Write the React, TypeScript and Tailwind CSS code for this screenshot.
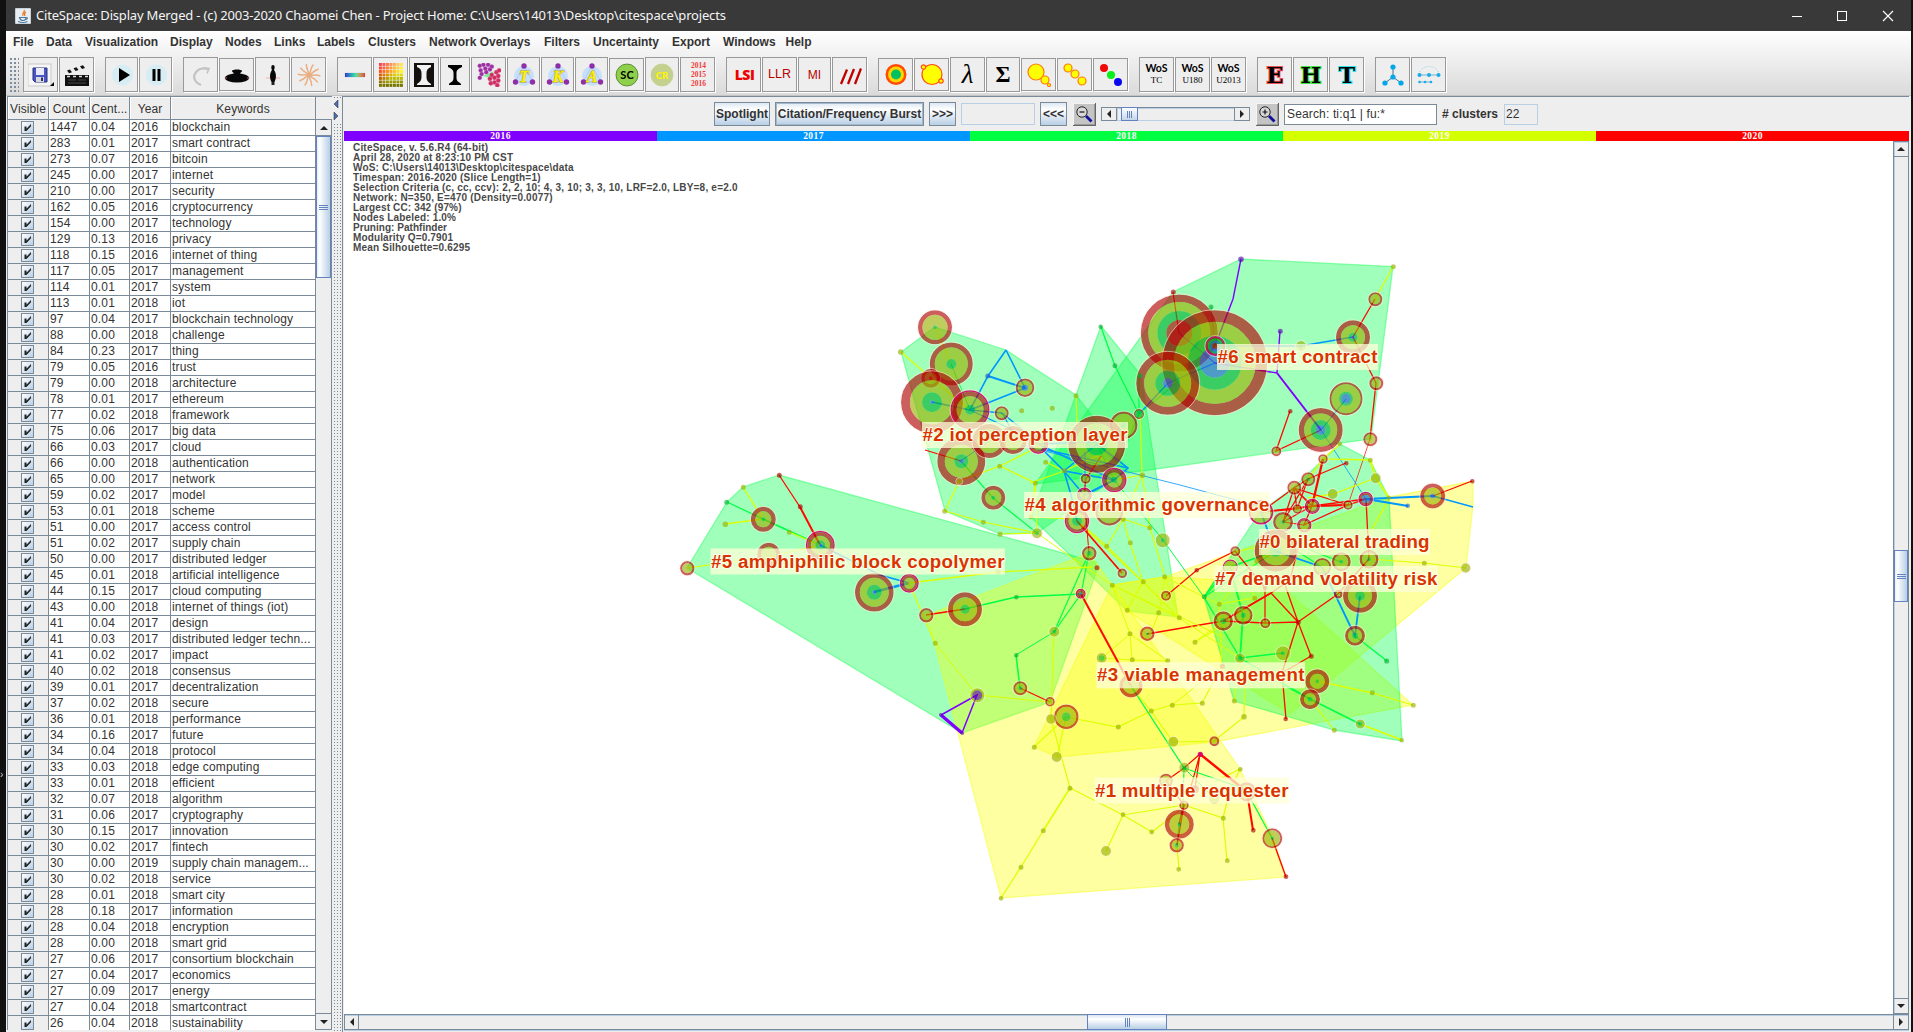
import React from "react";

const MENUS: [string, number][] = [
  ["File", 33], ["Data", 39], ["Visualization", 85], ["Display", 55], ["Nodes", 49], ["Links", 43], ["Labels", 51],
  ["Clusters", 61], ["Network Overlays", 115], ["Filters", 49], ["Uncertainty", 79], ["Export", 51], ["Windows", 62.5], ["Help", 40],
];

const ROWS = `1447|0.04|2016|blockchain
283|0.01|2017|smart contract
273|0.07|2016|bitcoin
245|0.00|2017|internet
210|0.00|2017|security
162|0.05|2016|cryptocurrency
154|0.00|2017|technology
129|0.13|2016|privacy
118|0.15|2016|internet of thing
117|0.05|2017|management
114|0.01|2017|system
113|0.01|2018|iot
97|0.04|2017|blockchain technology
88|0.00|2018|challenge
84|0.23|2017|thing
79|0.05|2016|trust
79|0.00|2018|architecture
78|0.01|2017|ethereum
77|0.02|2018|framework
75|0.06|2017|big data
66|0.03|2017|cloud
66|0.00|2018|authentication
65|0.00|2017|network
59|0.02|2017|model
53|0.01|2018|scheme
51|0.00|2017|access control
51|0.02|2017|supply chain
50|0.00|2017|distributed ledger
45|0.01|2018|artificial intelligence
44|0.15|2017|cloud computing
43|0.00|2018|internet of things (iot)
41|0.04|2017|design
41|0.03|2017|distributed ledger techn...
41|0.02|2017|impact
40|0.02|2018|consensus
39|0.01|2017|decentralization
37|0.02|2018|secure
36|0.01|2018|performance
34|0.16|2017|future
34|0.04|2018|protocol
33|0.03|2018|edge computing
33|0.01|2018|efficient
32|0.07|2018|algorithm
31|0.06|2017|cryptography
30|0.15|2017|innovation
30|0.02|2017|fintech
30|0.00|2019|supply chain managem...
30|0.02|2018|service
28|0.01|2018|smart city
28|0.18|2017|information
28|0.04|2018|encryption
28|0.00|2018|smart grid
27|0.06|2017|consortium blockchain
27|0.04|2017|economics
27|0.09|2017|energy
27|0.04|2018|smartcontract
26|0.04|2018|sustainability`.split("\n").map((l) => l.split("|"));

const INFO: [string, number][] = [
  ["CiteSpace, v. 5.6.R4 (64-bit)", 135],
  ["April 28, 2020 at 8:23:10 PM CST", 160],
  ["WoS: C:\\Users\\14013\\Desktop\\citespace\\data", 220.5],
  ["Timespan: 2016-2020 (Slice Length=1)", 187.5],
  ["Selection Criteria (c, cc, ccv): 2, 2, 10; 4, 3, 10; 3, 3, 10, LRF=2.0, LBY=8, e=2.0", 384.5],
  ["Network: N=350, E=470 (Density=0.0077)", 199.5],
  ["Largest CC: 342 (97%)", 108.5],
  ["Nodes Labeled: 1.0%", 103],
  ["Pruning: Pathfinder", 94],
  ["Modularity Q=0.7901", 100],
  ["Mean Silhouette=0.6295", 117],
];

/* ---------- network data, in window coordinates ---------- */

const HULLS: [string, string][] = [
  ["g", "779,475 743,487 727,502 687,568 962,733 1050,702 1096,573 1096,562"],
  ["g", "935,327 1006,350 1076,395 1097,422 1127,470 1037,533 1000,534 945,511 901,352"],
  ["g", "1101,326 1141,375 1178,617 1127,611 1031,517 1076,395"],
  ["g", "1173,292 1241,259 1393,266.5 1371,439 1142,471 1035,484"],
  ["y", "927,615 1089,553 1112,585 1240,769 1273,838 1286,877 1001,898"],
  ["y", "1112,585 1164,577 1278,583 1413,705 1214,742 1057,757 1034,747"],
  ["y", "1112,585 1164,577 1204,563 1389,497 1473,481 1473,506 1466,568 1290,714 1127,611"],
  ["g", "1340,444 1370,460 1389,498 1402,741 1334,730 1234,701 1204,597 1235,550 1260,512 1294,487"],
];

const EDGES = `y1 935,327 951,364
y1.3 901,352 931,378 970,410
g1 951,364 970,410
b1.3 932,402 970,410 1002,413
b1.6 1006,350 988,376 970,410 1025,388 1006,350
b2 988,376 1025,388
b1.3 970,410 1013,430 1038,444 1097,442
b1.3 1002,413 1013,432 1002,413 1038,442
r1.2 925,450 961,461
b1 961,461 989,441
g1.2 961,461 993,498 1037,533
y1.2 945,511 959,481 1000,466 1035,483 1037,533 983,522 945,511
y1.2 1000,534 1037,533
y1.2 1000,466 1038,447
y1.2 1035,483 1031,517
y1.2 1076,396 1077,425
y1.2 1046,462 1064,471 1097,456 1108,462
y1.2 1064,471 1030,483
y1.2 1114,480 1142,475 1140,414
y1.2 1142,475 1123,519 1107,546
y1.2 1142,475 1150,528 1165,577
y1 1037,533 1075,560 1112,585
y1.2 1077,521 1107,546 1143,582 1130,543 1123,519 1150,528
y1.2 1077,521 1143,582 1127,610
y1.2 1031,517 1070,519
y1.2 1143,582 1179,618
g1.3 1101,327 1115,366 1139,414
g1.2 1139,376 1139,414 1118,464 1097,444
g1.3 1124,425 1097,444 1114,480
g1 1114,480 1163,540 1204,597
b1.3 1139,414 1168,383 1215,363
g1 1139,414 1179,381
b1.6 1038,444 1114,480 1064,471 1084,495 1114,480
b1.6 1042,449 1064,471 1071,495 1077,521
b1.6 1064,471 1097,444 1128,468 1114,480 1080,498
b1.3 1085,452 1085,495
b0.8 1021,445 1140,475 1180,485 1258,506
r1.3 1086,479 1101,456
r1.2 1086,479 1084,495
b1.6 1042,449 1128,468
r1.8 1077,521 1122,573
r1 1084,495 1089,553
r1.2 1173,292 1179,333
p1 1179,333 1215,363
g1 1211,307 1215,346
p1.4 1241,259 1233,299 1215,346
b1.4 1215,346 1301,346 1353,337
y1.3 1393,267 1375,299
r1.3 1375,299 1353,337 1376,383 1370,439
r0.7 1370,439 1348,505
p1.4 1215,363 1277,373 1280,331
p2 1277,373 1321,430
b1 1321,430 1346,399
b0.8 1321,430 1366,499
r1.3 1290,411 1276,451 1321,430
y1.3 1370,460 1323,459 1340,444
y2 1370,460 1376,478 1389,498
y1.3 1308,479 1323,459
y1.3 1308,498 1333,494 1376,478
y1.3 1389,498 1369,535
r2.2 1323,459 1312,506
r1.3 1346,463 1308,479 1294,488 1348,505 1304,525 1312,506 1294,488 1261,512 1312,506 1366,499
r1.3 1308,479 1283,522 1294,488 1297,509 1261,512
r1.3 1312,506 1348,505 1366,499 1369,559
r1.8 1312,506 1348,505
r1.2 1308,479 1297,509 1312,506 1294,488
r1 1283,522 1304,525
r1.2 1283,522 1312,506
b2 1366,499 1433,496
b2 1366,499 1408,506
b1.3 1433,496 1473,507
r1.3 1433,496 1472,481
b1.8 1261,512 1275,551 1322,567 1355,636 1360,596
g1.8 1276,551 1230,567
g1.2 1276,551 1204,597
g1.2 1295,550 1322,567
g1.3 1310,550 1341,562
y1.2 1369,559 1424,563 1466,568
y1.2 1230,553 1257,547
y1 1257,561 1276,551
y1 1219,604 1257,561
r1.2 1166,596 1197,570 1235,551 1265,588 1265,623
r1.3 1223,621 1271,593 1290,580 1298,548
r1.3 1271,593 1298,622 1285,585
r1.3 1298,622 1338,594 1369,559
r1.3 1147,634 1223,621 1265,623 1298,622 1311,656 1282,673 1286,719
r1.3 1298,622 1282,673
r1.8 1223,621 1271,593
g1.8 1230,567 1243,615 1240,658
g1.4 1230,567 1204,597 1240,658 1283,653
g1.3 1204,597 1222,570
g1.3 1240,658 1310,699
g1.6 1282,684 1310,699 1360,724
y1.8 1360,724 1402,740
g1.5 1355,636 1387,661
y1.3 1317,681 1372,693 1413,705
y1.2 1310,699 1334,730
y1 1165,577 1204,597 1219,604 1255,598 1252,590
y1 1165,577 1159,613 1150,634
y1 1223,621 1195,642
y1 1219,604 1222,666
y1 1112,585 1223,637
y1 1179,618 1240,658
y1 1165,577 1179,618 1112,585 1130,634 1132,660
y1 1130,634 1102,658 1132,660 1168,661 1130,634
y1.2 1195,642 1223,625
y1.2 1222,666 1202,703 1172,705 1151,711 1118,727 1066,717
y1 1172,705 1222,666
y1.2 1245,666 1244,717 1214,741 1173,742 1151,711 1131,686
y1.2 1234,701 1240,664
g1.2 1089,553 1081,594 1054,632
g1.2 1089,553 1054,632
g1.3 1081,594 1016,597 965,609
g1 1054,632 1016,655
g1.5 1016,655 1020,688
r1.3 1020,688 1050,702
r2 1081,594 1131,686
g1.3 1131,686 1184,768
y1.2 1054,632 1051,719 1070,788
y1 1050,702 977,695
y1.2 1034,747 1066,717 1057,757
y1.6 1070,788 1043,831
y1.3 1043,831 1021,867 1001,898
y1.2 1070,788 1123,815 1184,805 1223,818 1227,861
y1.2 1223,818 1230,790 1240,769 1214,782
y1.2 1106,851 1123,815 1152,832 1179,811
y1.2 1177,845 1179,869
r1.2 1166,781 1184,768 1200,754
r1.2 1200,754 1195,789 1200,754 1190,790
r2.4 1200,754 1247,792
r2 1247,792 1253,830
g1.3 1184,768 1242,788
g1.2 1184,768 1183,805 1179,824 1177,845
g1 1184,768 1214,798
g1.3 1247,792 1272,838
r1.4 1272,838 1286,877
r1.3 1166,781 1184,805 1179,824
r1.4 1177,845 1184,805
r1.3 779,475 800,507
r2 800,507 820,545
y1.3 743,487 763,519 725,524
g1.3 727,502 763,519
g1.8 763,519 820,545
y1.3 789,532 820,545
y1.2 687,568 768,557 820,545
b1.8 820,545 880,575 909,583
b2.6 874,592 909,583
y1.3 909,583 998,572 1092,567
y1.3 909,583 935,643
r1.3 926,615 965,609
y1 935,643 977,695
p1.5 941,715 977,695 962,733
p3.2 941,715 962,733`.split("\n");

const NODES = `935,327.3 R17 Y12.5 G2
951.3,364 R21.5 Y16.5 G5
930.7,378.3 R9.5 Y6 R2
932,402.3 R31 Y22 G10 B2
970,409.7 M19.5 R18 Y13.5 G5
1025,387.7 R9.3 Y7.3 B3
987.7,376 B2.5
1001.7,413.3 R7 Y5 G1
900.7,352 Y2.8
961.3,461.3 R24 Y16.5 G7 B2.5
989.3,441 R17 Y12
1013,440 R14 Y10
1038.3,444 M10 R8.5 Y6
1021.7,410.7 Y2.5
1052.3,408.3 Y2.5
999.7,466.3 Y2.5
1035.3,483.3 Y2.5
1045.7,462.3 Y2.5
993.3,497.7 R12 Y8 G2
959.3,481.3 Y3
944.7,511.3 Y2.5
983.3,522.3 Y2.5
1000,534.3 Y2.5
1037,533.3 Y5 G2
1076,395.7 Y2.5
1100.7,326.7 G2.3
1115,365.7 G2.5
1139,414 R5 G3.6
1123.7,425.3 R13.8 Y11.5 G3
1096.7,444.3 R28.5 Y21 G11
1064.3,470.7 Y2.5
1085.7,478.7 R5 Y3
1114.3,480 M12.3 R10.8 Y7.5 G3
1084.3,495 M7.5 R6 Y4.5
1142.3,475.3 Y2.8
1077,521 M12.3 R10.8 Y8.5 G5
1109.3,511.7 R14 Y11.5
1123.3,519.3 Y2.5
1149.7,527.7 Y2.5
1030.7,516.7 Y2.5
1130.3,542.7 Y2.5
1106.7,546.3 Y2.5
1162.7,540.3 Y7 G2
1089.3,553.3 R7.3 Y5 G2.5
1179.3,333 R38.5 Y31 G22 R13
1214.7,362.7 R52.5 Y41 G27 B15
1167.7,383.3 R31.5 Y23.5 G12.5 B5
1215.3,346 M10 R8.5 G7.5 B5.5 R3
1211,307 G2.5
1173.3,292 R2.5
1241,259.3 P2.8
1393.3,266.7 Y2.5
1375.3,299.3 R7 Y5
1353,337.3 R17 Y12 G4.5 B2
1376.3,383.3 R7 Y4.8
1370.3,439.3 R7 Y5
1346,398.7 R16.5 Y14.5 G7 B5
1320.7,430 R22 Y16.5 G10 B5
1280.3,331.3 P2.5
1301,346 Y5 G2
1290.3,411.3 R2.3
1276.3,451.3 R5 Y3
1323,459 R4.8 Y3
1346.3,463.3 R2.3
1370.3,460.3 Y2.5
1339.7,443.7 Y2.3
1140,375.7 G2.5
1294.3,487.7 R7 Y5
1308.3,479.3 R7 Y5 G2
1375.7,478.3 Y5
1332.7,494 Y5
1348,505 R4.7 Y3
1365.7,499 M7.3 R6 B4
1388.7,497.7 Y2.3
1432.7,496 R12.5 Y8.5 B2.5
1407.7,505.7 B2.3
1472.3,481.3 R2.3
1312.3,506.3 M7.6 R6.3 Y4.5
1297.3,509 R4.7 Y3
1283,522 R10 Y7.5 G2
1304.3,525.3 M7.2 R6 Y4.5
1261,512.3 M12.3 Y10.5
1235.3,551.3 R5 Y3
1275.7,550.7 R21 Y14.5 G6
1230.3,567 M7.6 Y6.3
1256.7,561 Y2.5
1196.7,570.3 R2.3
1166,595.7 R5 Y3
1164.7,576.7 Y2.5
1204.3,596.7 G2.5
1219.3,604.3 Y2.5
1254.7,598.3 Y2.5
1265,588 R2.3
1223.3,621 R9.7 Y7 G3
1243.3,615.3 R9.3 Y7 G2.5
1265.3,623.3 R5 Y3
1298.3,622.3 R2.5
1311.3,656.3 R2.5
1283,653.3 Y7 G2
1240,658.3 Y4.8 G2.5
1195,642.3 Y2.5
1179.3,617.7 Y2.5
1222.3,666.3 R2.6
1317.3,681.3 R12 Y7.5 G2
1310,699.3 R10 Y6 G2.5
1372.3,692.7 Y2.5
1413.3,705.3 Y2.5
1360.3,724 Y4.6 G2.3
1401.7,740.3 Y2.3
1334.3,730.3 Y2.5
1285.7,719 R2.3
1234.3,701 Y2.5
1244,716.7 Y2.8
1214.3,741.3 R5 Y2.8
1173.3,741.7 Y5
1202.3,703.3 Y2.5
1172.3,705.3 Y2.5
1322.3,567 R9 Y7
1341.3,561.7 R9.5 Y7 G2
1369,559.3 R9.5 Y7 G2
1424.3,563.3 Y2.5
1465.7,568 Y4.7
1338.3,594 R4.5 Y2
1360,595.7 R17 Y12 G5
1355,635.7 R10 Y7 G3
1386.7,661 G2.6
779.3,475.3 R2.5
800.3,506.7 R2.5
743.3,487.3 Y2.5
726.7,502.3 G2.5
725.3,524.3 Y2.8
763.3,519.3 R12.5 Y8 G2
789.3,532.3 Y2.5
820.3,545.3 M14.5 R13 Y9.5 G5 B2
768.7,554.3 R11.5 Y7.5
687.3,568.3 R7.2 Y5
874.3,592.3 R19.3 Y14.5 G7.5 B2
909.3,583.3 M9.5 R8 Y5.5
926.3,615.3 R7.2 Y5
965,609.3 R17 Y12 G4.7
935.3,643.3 Y2.5
977.3,695.3 Y7 P5
940.7,714.7 P1.8
962.3,733.3 P1.8
998,571.7 Y2.5
1080.7,593.7 M5 R3.5 B1.5
1122.3,573.3 R4.8 Y2.8
1097,567.7 R2.5
1016.3,597.3 G2.3
1054.3,631.7 Y5 G2.3
1016.3,655.3 G2.3
1020.3,688.3 R7 Y5 G2
1050,701.7 R4.8 Y3
1066.3,716.7 R12.3 Y10 G4.5
1051,719 Y4.8
1056.7,757 Y5
1034.3,747.3 Y2.5
1112.3,585.3 Y2.5
1143.3,581.7 Y2.5
1127.3,610.3 Y2.5
1158.7,612.7 Y2.5
1130,633.7 Y2.5
1101.7,658 Y5 G3
1132.3,659.7 Y2.5
1167.7,660.7 Y2.5
1147.3,633.7 R7.3 Y5 G1.5
1131,685.7 R11.7 Y8
1151.3,711 Y2.5
1118.3,727 Y2.5
1184.3,767.7 Y5 G2.5
1200.3,754.3 M2.6
1166,780.7 R7 Y5
1195,789.3 R4
1214.3,798.3 Y5.5
1246.7,791.7 R9.5 Y7
1240.3,769.3 Y2.4
1253.3,830.3 R2.4
1272.3,838.3 R10 Y8 G1.8
1286,876.7 R2.4
1184,805.3 R4.7 Y3
1179.3,824.3 R14.5 Y10 G2
1176.7,845.3 R7.2 Y5 G2.3
1178.7,869.3 Y2.4
1151.7,832 Y2.4
1123,814.7 Y2.4
1106,851 Y5
1070,788.3 Y2.5
1043.3,830.7 Y2.5
1021,867.3 Y2.5
1001,898.3 Y2.4
1223.3,818.3 Y2.5
1227.3,860.7 Y2.4`.split("\n");

const LABELS: [string, number, number, number][] = [
  ["#6 smart contract", 1217, 1378, 344],
  ["#2 iot perception layer", 922, 1128, 422],
  ["#4 algorithmic governance", 1024, 1270, 492],
  ["#0 bilateral trading", 1259, 1430, 529],
  ["#5 amphiphilic block copolymer", 710.5, 1005, 548.5],
  ["#7 demand volatility risk", 1214.5, 1438, 566],
  ["#3 viable management", 1096.5, 1305, 662.3],
  ["#1 multiple requester", 1094.5, 1289, 777.5],
];

const EDGE_COLOR: Record<string, string> = { y: "#dcff00", g: "#00ff46", b: "#0096ff", r: "#ff0800", p: "#7f00ff" };
const RING_COLOR: Record<string, string> = { R: "#b00000", Y: "#98b000", G: "#00b030", B: "#1f60d0", P: "#5a00b4", M: "#d8006c" };

function NetworkNode({ spec }: { spec: string }) {
  const [pos, ...rings] = spec.split(" ");
  const [x, y] = pos.split(",").map(Number);
  const radii = rings.map((r) => parseFloat(r.slice(1)));
  return (
    <g>
      {rings.map((ring, i) => {
        const kind = ring[0];
        const outer = radii[i];
        const inner = radii[i + 1] ?? 0;
        return (
          <circle
            key={i}
            cx={x}
            cy={y}
            r={(outer + inner) / 2}
            fill="none"
            stroke={RING_COLOR[kind]}
            strokeWidth={outer - inner}
            opacity={kind === "M" ? 0.9 : 0.63}
          />
        );
      })}
      {radii[0] > 2.9 && <circle cx={x} cy={y} r={radii[0] + 0.5} fill="none" stroke="#ffe9dc" strokeWidth={0.8} opacity={0.7} />}
    </g>
  );
}

function Network() {
  return (
    <svg className="block h-[873px] w-[1549px]" viewBox="344 141 1549 873">
      {HULLS.map(([kind, pts], i) => (
        <polygon
          key={i}
          points={pts}
          fill={kind === "g" ? "#00ff4a" : "#faff00"}
          fillOpacity={0.37}
          stroke={kind === "g" ? "#00ff46" : "#f4ff00"}
          strokeOpacity={0.4}
          strokeWidth={1.3}
        />
      ))}
      {EDGES.map((line, i) => {
        const [style, ...pts] = line.split(" ");
        return (
          <polyline key={i} points={pts.join(" ")} fill="none" stroke={EDGE_COLOR[style[0]]} strokeWidth={parseFloat(style.slice(1))} />
        );
      })}
      {NODES.map((n, i) => (
        <NetworkNode key={i} spec={n} />
      ))}
      {INFO.map(([text, width], i) => (
        <text key={text} x={353} y={151 + i * 10} textLength={width} fontSize="10" fontWeight="700" fill="#484848" fontFamily="Liberation Sans, Arial, sans-serif">
          {text}
        </text>
      ))}
      {LABELS.map(([text, x1, x2, y]) => (
        <g key={text}>
          <rect x={x1} y={y} width={x2 - x1} height={26} fill="#ffffd8" fillOpacity={0.75} />
          <text
            x={x1 + 0.5}
            y={y + 19}
            textLength={x2 - x1 - 1}
            fontSize="18.7"
            fontWeight="700"
            fill="#d93400"
            stroke="#fffff0"
            strokeWidth="1.6"
            paintOrder="stroke"
            fontFamily="Liberation Sans, Arial, sans-serif"
          >
            {text}
          </text>
        </g>
      ))}
    </svg>
  );
}

/* ---------- toolbar ---------- */

function Cluster({ letter }: { letter: string }) {
  return (
    <svg viewBox="0 0 24 24" className="size-6">
      <circle cx="12" cy="13" r="10" fill="#c6dffb" />
      <path d="M12 3 3 19h18z" fill="none" stroke="#a9c4f0" strokeWidth="0.8" />
      <circle cx="12" cy="3" r="2.7" fill="#8e2fa8" />
      <circle cx="3.5" cy="19" r="2.7" fill="#8e2fa8" />
      <circle cx="20.5" cy="19" r="2.7" fill="#8e2fa8" />
      <text x="12" y="19" textAnchor="middle" fontSize="16" fontStyle="italic" fontWeight="700" fill="#fff000" stroke="#b8a020" strokeWidth=".8" paintOrder="stroke" fontFamily="Liberation Serif, serif">
        {letter}
      </text>
    </svg>
  );
}

function Badge({ text, fill, color }: { text: string; fill: string; color: string }) {
  return (
    <svg viewBox="0 0 24 24" className="size-6">
      <circle cx="12" cy="12" r="11" fill={fill} stroke={color === "#000" ? "#4c7a2c" : fill} strokeWidth="0.8" />
      <text x="12" y="16" textAnchor="middle" fontSize={color === "#000" ? 11 : 9.5} fontWeight={color === "#000" ? 700 : 900} fill={color} fontFamily="Lato, sans-serif">
        {text}
      </text>
    </svg>
  );
}

function Wos({ sub }: { sub: string }) {
  return (
    <div className="flex flex-col items-center leading-none text-black">
      <span className="font-['Lato'] text-[10.5px] leading-[11px] font-bold">WoS</span>
      <span className="font-['Liberation_Serif'] text-[9px] leading-[12px]">{sub}</span>
    </div>
  );
}

function Slab({ letter, glow }: { letter: string; glow: string }) {
  return (
    <svg viewBox="0 0 24 24" className="size-6">
      <text x="12" y="20" textAnchor="middle" fontSize="22" fontWeight="700" fill="#000" stroke={glow} strokeWidth="2" paintOrder="stroke" fontFamily="DejaVu Serif, serif">
        {letter}
      </text>
    </svg>
  );
}

const SPIRAL = Array.from({ length: 10 }, (_, i) => i * 36);
const YEARS = ["2014", "2015", "2016"];
const HEAT = Array.from({ length: 7 }, (_, r) => Array.from({ length: 7 }, (_, c) => [r, c])).flat();
const PURPLE_DOTS = [[2, 3], [6, 2], [11, 2], [15, 4], [3, 8], [8, 6], [13, 7], [4, 12], [2, 16], [9, 10]];
const PINK_DOTS = [[15, 13], [20, 10], [23, 8], [13, 17], [18, 16], [22, 14], [14, 22], [18, 21], [22, 19], [21, 24]];

type Tool = { w: number; gap?: number; low?: boolean; icon: React.ReactNode };

const TOOLS: Tool[] = [
  {
    w: 35,
    icon: (
      <svg viewBox="0 0 26 24" className="h-6 w-[26px]">
        <rect x="0" y="1" width="23" height="22" fill="#f6f6f6" stroke="#c8c8c8" />
        <path d="M5 5h14v14H7l-2-2z" fill="#4d55c4" stroke="#26307f" strokeWidth="1" />
        <rect x="8" y="5" width="8" height="7" fill="#e9ecf8" />
        <rect x="8" y="14" width="8" height="5" fill="#d9d9d9" />
        <rect x="13" y="14.500" width="2" height="3.500" fill="#26307f" />
        <path d="M26 19v4h-4z" fill="#000" />
      </svg>
    ),
  },
  {
    w: 35,
    icon: (
      <svg viewBox="0 0 24 24" className="size-6">
        <path d="M0 12h24v11H0z" fill="#111" />
        <path d="M0 8 21 1l1 3.500L1 11.500z" fill="#eee" />
        <path d="m2 7.500 3-1 2 2.700-3 1zM8.500 5.300l3-1 2 2.700-3 1zM15 3.200l3-1 2 2.700-3 1z" fill="#111" />
        <path d="M2 13.500h21" stroke="#ddd" strokeWidth="1.500" strokeDasharray="3 3" />
        <path d="M3 17h8M3 20h18M13 17h8" stroke="#555" strokeWidth=".8" />
      </svg>
    ),
  },
  {
    w: 33,
    gap: 11,
    icon: (
      <svg viewBox="0 0 24 24" className="size-6">
        <circle cx="12.500" cy="12" r="10.500" fill="#d6edf3" />
        <path d="M9 5v14l11-7z" fill="#000" />
      </svg>
    ),
  },
  {
    w: 33,
    icon: (
      <svg viewBox="0 0 24 24" className="size-6">
        <circle cx="12.500" cy="12" r="10.500" fill="#d6edf3" />
        <path d="M8.500 6h3v12h-3zM13.500 6h3v12h-3z" fill="#000" />
      </svg>
    ),
  },
  {
    w: 35,
    gap: 11,
    icon: (
      <svg viewBox="0 0 24 24" className="size-6">
        <path d="M12 22C5 19 3 13 8 8c3-3 7-3 11-2" fill="none" stroke="#c2c2c2" strokeWidth="2.200" />
        <path d="m14 5 6 .5-2 5" fill="none" stroke="#c2c2c2" strokeWidth="1.600" />
      </svg>
    ),
  },
  {
    w: 35,
    low: true,
    icon: (
      <svg viewBox="0 0 26 24" className="h-6 w-[26px]">
        <ellipse cx="13" cy="15" rx="12" ry="4.500" fill="#080808" />
        <path d="M8 8c0-2 10-2 10 0 0 1-2 1-2 4h-6c0-3-2-3-2-4z" fill="#080808" />
        <path d="M0 15h3M23 15h3" stroke="#f88" strokeWidth=".7" />
      </svg>
    ),
  },
  {
    w: 35,
    icon: (
      <svg viewBox="0 0 24 24" className="size-6">
        <path d="M5 15h14" stroke="#f99" strokeWidth=".8" />
        <path d="M12 2c2 0 2 3 1 5 3 4 2 9 .5 12h-3C9 16 8 11 11 7c-1-2-1-5 1-5z" fill="#080808" />
        <path d="M10.500 19h3v3h-3z" fill="#222" />
      </svg>
    ),
  },
  {
    w: 35,
    icon: (
      <svg viewBox="0 0 24 24" className="size-6">
        {SPIRAL.map((a) => (
          <path key={a} d="M12 12c2-3 1-6 4-10" fill="none" stroke="#ebae83" strokeWidth="1.500" strokeLinecap="round" transform={`rotate(${a} 12 12)`} />
        ))}
        <circle cx="12" cy="12" r="2.500" fill="#ebae83" />
      </svg>
    ),
  },
  { w: 35, gap: 11, icon: <div className="h-1 w-5 bg-linear-to-r from-[#3a30c8] via-[#35e0a0] to-[#e04020] shadow-[0_0_1px_#5080ff]" /> },
  {
    w: 35,
    icon: (
      <svg viewBox="0 0 24 24" className="size-6">
        {HEAT.map(([r, c]) => {
          const v = Math.round(255 - Math.max(0, r - 2) * 34);
          const g = Math.round(Math.min(v, 60 + c * 28 + r * 10));
          return <rect key={`${r}-${c}`} x={c * 3.5} y={r * 3.5} width="2.900" height="2.900" fill={`rgb(${v},${g},${Math.max(0, 80 - r * 26)})`} />;
        })}
      </svg>
    ),
  },
  {
    w: 30,
    icon: (
      <svg viewBox="0 0 20 24" className="h-6 w-5">
        <rect width="20" height="24" fill="#14100d" />
        <path d="M3 2h14v2c-3 1-4.500 3-4.500 6v4c0 4 2 5 4.500 7v1H3v-1c2.500-2 4.500-3 4.500-7v-4C7.500 7 6 5 3 4z" fill="#f2f2f2" />
      </svg>
    ),
  },
  {
    w: 30,
    icon: (
      <svg viewBox="0 0 20 24" className="h-6 w-5">
        <path d="M3 2h14v2c-4 2-5.500 3-5.500 6v5c0 4 3 4 4.500 6v1H4v-1c1.500-2 4.500-2 4.500-6v-5C8.500 7 7 6 3 4z" fill="#000" />
      </svg>
    ),
  },
  {
    w: 35,
    icon: (
      <svg viewBox="0 0 24 26" className="h-6 w-6">
        <path d="M5 14 17 9l-1 8z" fill="#76f49b" />
        {PURPLE_DOTS.map(([x, y]) => (
          <circle key={`${x}-${y}`} cx={x} cy={y} r="2.300" fill="#9b2fa2" stroke="#c980cc" strokeWidth=".4" />
        ))}
        {PINK_DOTS.map(([x, y]) => (
          <circle key={`${x}-${y}`} cx={x} cy={y} r="2.400" fill="#d02c62" stroke="#e888a8" strokeWidth=".4" />
        ))}
      </svg>
    ),
  },
  { w: 33, icon: <Cluster letter="T" /> },
  { w: 33, icon: <Cluster letter="K" /> },
  { w: 33, icon: <Cluster letter="A" /> },
  { w: 35, low: true, icon: <Badge text="SC" fill="#8ed04b" color="#000" /> },
  { w: 34, icon: <Badge text="CR" fill="#c3d08e" color="#fff600" /> },
  {
    w: 35,
    icon: (
      <div className="flex flex-col pl-[2px] font-['Liberation_Serif'] text-[7.5px] leading-[9.3px] font-bold text-[#f03c3c]">
        {YEARS.map((y) => (
          <span key={y}>{y}</span>
        ))}
      </div>
    ),
  },
  { w: 35, gap: 11, icon: <span className="pl-[2px] font-['Open_Sans'] text-[14px] font-extrabold tracking-[-0.5px] text-[#f00000]">LSI</span> },
  { w: 35, icon: <span className="font-['Liberation_Sans'] text-[12.5px] text-[#b80000]">LLR</span> },
  { w: 33, icon: <span className="font-['Liberation_Sans'] text-[12px] text-[#b80000]">MI</span> },
  {
    w: 35,
    icon: (
      <svg viewBox="0 0 24 24" className="size-6">
        <path d="M9 6.500 3 21M16 6 10 21M23 5.500 17 21" stroke="#c00000" strokeWidth="2.300" />
      </svg>
    ),
  },
  {
    w: 35,
    gap: 11,
    low: true,
    icon: (
      <svg viewBox="0 0 24 24" className="size-6">
        <circle cx="12" cy="11.500" r="10.500" fill="#ff4a00" />
        <circle cx="12" cy="11.500" r="8" fill="#ffd500" />
        <circle cx="12" cy="11.500" r="5" fill="#00c060" />
      </svg>
    ),
  },
  {
    w: 35,
    low: true,
    icon: (
      <svg viewBox="0 0 24 24" className="size-6" fill="#ffff00" stroke="#ff5010" strokeWidth="1.200">
        <circle cx="12" cy="11.500" r="10" />
        <circle cx="3.500" cy="4" r="2.200" />
        <circle cx="21" cy="18" r="2.200" />
      </svg>
    ),
  },
  { w: 35, icon: <span className="font-['Liberation_Serif'] text-[27px] leading-none text-black italic">λ</span> },
  { w: 34, icon: <span className="font-['Liberation_Serif'] text-[23px] leading-none font-bold text-black">Σ</span> },
  {
    w: 35,
    low: true,
    icon: (
      <svg viewBox="0 0 24 24" className="size-6" fill="#ffff00" stroke="#ff7a10" strokeWidth="1.200">
        <circle cx="9" cy="9" r="8" />
        <circle cx="18" cy="17" r="4" />
        <circle cx="22" cy="22" r="1.500" />
      </svg>
    ),
  },
  {
    w: 35,
    low: true,
    icon: (
      <svg viewBox="0 0 24 24" className="size-6" fill="#ffff00" stroke="#ff7a10" strokeWidth="1.200">
        <circle cx="5" cy="5" r="4" />
        <circle cx="12" cy="11" r="4" />
        <circle cx="19" cy="18" r="4" />
      </svg>
    ),
  },
  {
    w: 35,
    low: true,
    icon: (
      <svg viewBox="0 0 24 24" className="size-6">
        <circle cx="5" cy="5" r="4" fill="#f00808" />
        <circle cx="12" cy="12" r="4" fill="#08ee18" />
        <circle cx="19" cy="19" r="4" fill="#0808f0" />
      </svg>
    ),
  },
  { w: 35, gap: 11, icon: <Wos sub="TC" /> },
  { w: 35, icon: <Wos sub="U180" /> },
  { w: 35, icon: <Wos sub="U2013" /> },
  { w: 35, gap: 11, icon: <Slab letter="E" glow="#f05050" /> },
  { w: 35, icon: <Slab letter="H" glow="#48e048" /> },
  { w: 35, icon: <Slab letter="T" glow="#30e0e8" /> },
  {
    w: 35,
    gap: 11,
    icon: (
      <svg viewBox="0 0 24 24" className="size-6">
        <path d="M12 4v10M12 14l-8 6M12 14l8 6" stroke="#44718c" strokeWidth="1" />
        <g fill="#00a8ea">
          <circle cx="12" cy="4" r="2.600" />
          <circle cx="12" cy="14" r="2.600" />
          <circle cx="4" cy="20" r="2.600" />
          <circle cx="20" cy="20" r="2.600" />
        </g>
      </svg>
    ),
  },
  {
    w: 35,
    icon: (
      <svg viewBox="0 0 24 24" className="size-6">
        <path d="M2 11C4 1 20 1 22 11" fill="none" stroke="#a5d8ea" strokeWidth="1" strokeDasharray="1 1" />
        <path d="M2 12h20M2 19h12" stroke="#6ab4d0" strokeWidth="1" />
        <g fill="#18acea">
          <circle cx="2.500" cy="12" r="2" />
          <circle cx="12" cy="12" r="2" />
          <circle cx="21.500" cy="12" r="2" />
          <circle cx="2.500" cy="19" r="1.300" />
          <circle cx="8" cy="19" r="1.300" />
          <circle cx="14" cy="19" r="1.300" />
        </g>
      </svg>
    ),
  },
];

function Toolbar() {
  return (
    <div className="flex h-[38px] items-start">
      <div className="mr-[4px] ml-[2px] h-[35px] w-[10px] bg-[radial-gradient(#7a8a99_0.7px,transparent_0.9px)] bg-[length:4px_4px]" />
      {TOOLS.map((t, i) => (
        <div
          key={i}
          className={`flex shrink-0 items-center justify-center border border-[#999] bg-[#eeeeee] shadow-[1px_1px_0_#fff] ${t.low ? "mt-px h-[33px]" : "h-[35px]"}`}
          style={{ width: t.w, marginLeft: i === 0 ? 0 : (t.gap ?? 1) }}
        >
          {t.icon}
        </div>
      ))}
    </div>
  );
}

/* ---------- Swing-style widgets ---------- */

function Arrow({ dir }: { dir: "up" | "down" | "left" | "right" }) {
  const d = { up: "M0 6h8L4 2z", down: "M0 2h8L4 6z", left: "M6 0v8L2 4z", right: "M2 0v8l4-4z" }[dir];
  return (
    <svg viewBox="0 0 8 8" className="size-2">
      <path d={d} fill="#222" />
    </svg>
  );
}

function Magnifier({ plus }: { plus?: boolean }) {
  return (
    <div className="flex size-[23px] items-center justify-center border-r border-b border-[#666] bg-[#c4c4c4] shadow-[inset_1px_1px_0_#f4f4f4,inset_-1px_-1px_0_#999]">
      <svg viewBox="0 0 18 18" className="size-[18px]">
        <path d="m11 11 5.500 5.500" stroke="#10109a" strokeWidth="2.800" />
        <circle cx="7" cy="7" r="5.200" fill="#d8d8d8" stroke="#222" strokeWidth="1" />
        <path d={plus ? "M4.500 7h5M7 4.500v5" : "M4.500 7h5"} stroke="#111" strokeWidth="1.200" />
      </svg>
    </div>
  );
}

const BTN = "flex h-[24px] items-center justify-center border border-[#7a8a99] bg-linear-to-b from-[#dde8f3] via-white via-30% to-[#b8cfe5] text-[12px] font-bold whitespace-nowrap text-[#333]";

function Controls() {
  return (
    <div className="flex h-[34px] items-center bg-[#eeeeee] pl-[370px] font-['Liberation_Sans']">
      <div className={`w-[56px] ${BTN}`}>Spotlight</div>
      <div className={`ml-[5px] w-[149px] shadow-[inset_0_0_0_1px_#a3b8cc] ${BTN}`}>Citation/Frequency Burst</div>
      <div className={`ml-[5px] w-[27px] ${BTN}`}>&gt;&gt;&gt;</div>
      <div className="ml-[5px] h-[22px] w-[74px] border border-[#b8cfe5]" />
      <div className={`ml-[5px] w-[27px] ${BTN}`}>&lt;&lt;&lt;</div>
      <div className="ml-[6px]">
        <Magnifier />
      </div>
      <div className="ml-[5px] flex h-[14px] w-[149px] border border-[#7a8a99]">
        <div className="flex w-[15px] items-center justify-center border-r border-[#7a8a99]">
          <Arrow dir="left" />
        </div>
        <div className="relative flex-1 shadow-[inset_1px_1px_0_#b8cfe5,0_1px_0_#b8cfe5]">
          <div className="absolute top-[-1px] left-[4px] flex h-[14px] w-[17px] items-center justify-center gap-px border border-[#6382bf] bg-linear-to-b from-white to-[#c3d6ea]">
            <i className="h-[7px] w-px bg-[#6382bf]" />
            <i className="h-[7px] w-px bg-[#6382bf]" />
            <i className="h-[7px] w-px bg-[#6382bf]" />
          </div>
        </div>
        <div className="flex w-[15px] items-center justify-center border-l border-[#7a8a99]">
          <Arrow dir="right" />
        </div>
      </div>
      <div className="ml-[6px]">
        <Magnifier plus />
      </div>
      <div className="ml-[5px] flex h-[21px] w-[153px] items-center border border-[#7a8a99] bg-white pl-[2px] text-[12px] tracking-[0.15px] text-[#333]">Search: ti:q1 | fu:*</div>
      <div className="ml-[5px] w-[62px] text-[12px] font-bold whitespace-nowrap text-[#333]"># clusters</div>
      <div className="flex h-[21px] w-[34px] items-center border border-[#b8cfe5] pl-px text-[12px] text-[#333]">22</div>
    </div>
  );
}

const GRID = "grid grid-cols-[41px_41px_40px_41px_145px]";

function KeywordTable() {
  return (
    <div className="flex h-[934px] w-[325px] flex-col border-t border-l border-[#7a8a99] bg-[#eeeeee] text-[12px] tracking-[0.1px] text-[#333]">
      <div className="flex h-[23px] border-b border-[#7a8a99]">
        <div className={`${GRID} h-full`}>
          {["Visible", "Count", "Cent...", "Year", "Keywords"].map((h) => (
            <div key={h} className="flex items-center justify-center overflow-hidden border-r border-[#7a8a99] pt-[2px] whitespace-nowrap shadow-[inset_1px_1px_0_#fff]">
              {h}
            </div>
          ))}
        </div>
      </div>
      <div className="flex min-h-0 flex-1">
        <div className="w-[308px] overflow-hidden">
          {ROWS.map((r, i) => (
            <div key={i} className={`${GRID} h-[16px] bg-white leading-[14px] whitespace-nowrap`}>
              <div className="flex items-center justify-center border-r border-b border-[#7a8a99] bg-[#eeeeee] pr-px">
                <div className="flex size-[13px] items-center justify-center border border-[#7a8a99] bg-linear-to-br from-white to-[#b8cfe5]">
                  <svg viewBox="0 0 9 9" className="size-[9px]">
                    <path d="M1.500 3.500h2v2.200L8 1v2.200L3.500 8h-2z" fill="#222" />
                  </svg>
                </div>
              </div>
              {r.map((c, k) => (
                <div key={k} className="overflow-hidden border-r border-b border-[#7a8a99] pl-[1px] tracking-[0.15px]">
                  {c}
                </div>
              ))}
            </div>
          ))}
        </div>
        <div className="flex w-[16px] flex-col border-r border-[#7a8a99]">
          <div className="flex h-[16px] items-center justify-center border-b border-[#7a8a99]">
            <Arrow dir="up" />
          </div>
          <div className="flex h-[142px] flex-col items-center justify-center gap-px border border-[#6382bf] bg-linear-to-r from-[#e6eef7] via-white via-20% to-[#b8cfe5]">
            <i className="h-px w-[9px] bg-[#6382bf]" />
            <i className="h-px w-[9px] bg-[#6382bf]" />
            <i className="h-px w-[9px] bg-[#6382bf]" />
          </div>
          <div className="flex-1" />
          <div className="flex h-[17px] items-center justify-center border-y border-[#7a8a99]">
            <Arrow dir="down" />
          </div>
        </div>
      </div>
    </div>
  );
}

const SLICES = [
  { year: "2016", cls: "bg-[#7f00ff]" },
  { year: "2017", cls: "bg-[#0096ff]" },
  { year: "2018", cls: "bg-[#00ff40]" },
  { year: "2019", cls: "bg-[#d4ff00]" },
  { year: "2020", cls: "bg-[#ff0000]" },
];

function CanvasPanel() {
  return (
    <div className="flex w-[1567px] flex-col border-t border-l border-[#7a8a99] bg-[#eeeeee] pl-px">
      <Controls />
      <div className="flex h-[10px]">
        {SLICES.map((s) => (
          <div key={s.year} className={`flex w-[313px] items-center justify-center overflow-hidden pt-[2px] font-['Liberation_Serif'] text-[9.5px] leading-none font-bold text-white ${s.cls}`}>
            <span className="tracking-[0.4px]">{s.year}</span>
          </div>
        ))}
      </div>
      <div className="flex">
        <div className="w-[1549px] bg-white">
          <Network />
        </div>
        <div className="flex h-[873px] w-[16px] flex-col border border-[#7a8a99] shadow-[inset_1px_1px_0_#b8cfe5]">
          <div className="flex h-[15px] items-center justify-center border-b border-[#7a8a99]">
            <Arrow dir="up" />
          </div>
          <div className="flex-1" />
          <div className="flex h-[52px] flex-col items-center justify-center gap-px border border-[#6382bf] bg-linear-to-r from-[#e6eef7] via-white via-20% to-[#b8cfe5]">
            <i className="h-px w-[9px] bg-[#6382bf]" />
            <i className="h-px w-[9px] bg-[#6382bf]" />
            <i className="h-px w-[9px] bg-[#6382bf]" />
          </div>
          <div className="h-[396px]" />
          <div className="flex h-[15px] items-center justify-center border-t border-[#7a8a99]">
            <Arrow dir="down" />
          </div>
        </div>
      </div>
      <div className="flex h-[16px] w-[1565px] border border-[#7a8a99] shadow-[inset_0_1px_0_#b8cfe5,0_1px_0_#b8cfe5]">
        <div className="flex w-[14px] items-center justify-center border-r border-[#7a8a99]">
          <Arrow dir="left" />
        </div>
        <div className="w-[728px]" />
        <div className="-my-px flex w-[80px] items-center justify-center gap-px border border-[#6382bf] bg-linear-to-b from-[#dbe6f2] via-white via-30% to-[#b8cfe5]">
          <i className="h-[9px] w-px bg-[#6382bf]" />
          <i className="h-[9px] w-px bg-[#6382bf]" />
          <i className="h-[9px] w-px bg-[#6382bf]" />
        </div>
        <div className="flex-1" />
        <div className="flex w-[15px] items-center justify-center border-l border-[#7a8a99]">
          <Arrow dir="right" />
        </div>
      </div>
    </div>
  );
}

function TitleBar() {
  return (
    <div className="flex h-[31px] items-center bg-[#393939] text-[#f4f4f4]">
      <svg viewBox="0 0 16 16" className="ml-[9px] size-4">
        <rect width="16" height="16" rx="1" fill="#e9eef2" stroke="#8fa4b4" strokeWidth=".8" />
        <path d="M9 2c2 2-3 3-1 6M11 4c-2 1-2 2-1 4" fill="none" stroke="#e8761c" strokeWidth="1.200" />
        <path d="M4.500 9.500h6.500c0 2-1 3-3 3s-3-1-3.500-3zM11 9.500c2-.5 2 2-.5 2M3 13.500c3 1.200 7 1.200 9.500 0" fill="none" stroke="#4a789c" strokeWidth="1.100" />
      </svg>
      <div className="ml-[5px] w-[1730px] font-['Noto_Sans'] text-[13px] tracking-[-0.19px] whitespace-nowrap">
        CiteSpace: Display Merged - (c) 2003-2020 Chaomei Chen - Project Home: C:\Users\14013\Desktop\citespace\projects
      </div>
      <svg viewBox="0 0 110 14" className="ml-[24px] h-[14px] w-[110px]" fill="none" stroke="#fff">
        <path d="M2 7.500h10" />
        <rect x="47.500" y="2.500" width="9" height="9" />
        <path d="m93 2 10 10M103 2 93 12" strokeWidth="1.200" />
      </svg>
    </div>
  );
}

export default function App() {
  return (
    <div className="flex h-[1032px] w-[1913px] overflow-hidden bg-[#121212] font-['Liberation_Sans',Arial,sans-serif]">
      <div className="flex w-[6px] shrink-0 flex-col justify-end bg-[#111] pb-[252px] text-[10px] leading-none text-[#ccc]">›</div>
      <div className="w-[1905px] shrink-0 bg-[#eeeeee]">
        <TitleBar />
        <div className="h-[65px] border-b border-[#c4c4c4] bg-linear-to-b from-white to-[#dadada] pl-[1px]">
          <div className="flex h-[26px] items-center pl-[6px] text-[12px] font-bold text-[#333]">
            {MENUS.map(([m, w]) => (
              <span key={m} className="mt-[-4px] shrink-0 whitespace-nowrap" style={{ width: w }}>
                {m}
              </span>
            ))}
          </div>
          <Toolbar />
        </div>
        <div className="flex h-[936px] pl-[1px]">
          <KeywordTable />
          <div className="ml-px flex w-[9px] flex-col bg-[#eeeeee] bg-[radial-gradient(#7a8a99_0.5px,transparent_0.7px)] bg-[length:3px_3px]">
            <svg viewBox="0 0 8 24" className="mt-[3px] h-6 w-2 bg-[#eeeeee]">
              <path d="M5 1v8L1 5z M1 13v8l4-4z" fill="#4a6fb5" stroke="#222" strokeWidth=".5" />
            </svg>
          </div>
          <CanvasPanel />
        </div>
      </div>
    </div>
  );
}
